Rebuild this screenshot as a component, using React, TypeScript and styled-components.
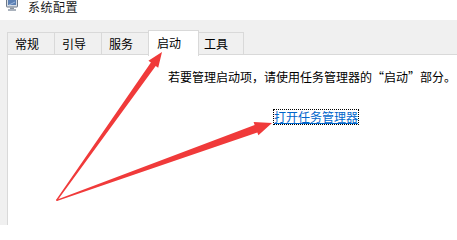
import React from 'react';
import styled, { createGlobalStyle } from 'styled-components';

const GlobalStyle = createGlobalStyle`
  html, body {
    margin: 0;
    padding: 0;
    background: #ffffff;
  }
  body {
    font-family: "Noto Sans CJK SC", "Microsoft YaHei", sans-serif;
    font-size: 12px;
    color: #000000;
  }
`;

const Window = styled.div`
  position: relative;
  width: 457px;
  height: 225px;
  overflow: hidden;
  display: flex;
  flex-direction: column;
  background: #f0f0f0;
`;

const TitleBar = styled.div`
  height: 20px;
  flex: none;
  background: #ffffff;
  display: flex;
  align-items: flex-start;
  gap: 10px;
  padding-left: 6px;
`;

const TitleText = styled.span`
  margin-top: 1px;
  font-size: 12px;
  line-height: 12px;
  color: #1a1a1a;
  letter-spacing: 0.5px;
`;

const Body = styled.div`
  flex: 1;
  display: flex;
  flex-direction: column;
  padding-top: 10px;
  min-height: 0;
`;

const TabStrip = styled.div`
  display: flex;
  align-items: flex-end;
  height: 25px;
  padding-left: 7px;
  position: relative;
  z-index: 1;
`;

const Tab = styled.div<{ $active?: boolean; $width: number }>`
  box-sizing: border-box;
  width: ${(p) => p.$width}px;
  height: ${(p) => (p.$active ? 26 : 23)}px;
  margin: ${(p) => (p.$active ? '0 -2px -1px -2px' : '0')};
  padding-left: ${(p) => (p.$active ? 8 : 7)}px;
  padding-top: ${(p) => (p.$active ? 5 : 4)}px;
  background: ${(p) => (p.$active ? '#ffffff' : '#f0f0f0')};
  border: 1px solid #d9d9d9;
  border-bottom: ${(p) => (p.$active ? 'none' : '1px solid #d9d9d9')};
  border-left-width: ${(p) => (p.$active ? 1 : 0)}px;
  font-size: 12px;
  line-height: 13px;
  color: #000000;
  position: relative;
  z-index: ${(p) => (p.$active ? 2 : 1)};

  &:first-child {
    border-left-width: 1px;
  }
`;

const Panel = styled.div`
  flex: 1;
  margin-left: 7px;
  margin-top: -1px;
  background: #ffffff;
  border: 1px solid #d9d9d9;
  border-right: none;
  border-bottom: none;
  display: flex;
  flex-direction: column;
  align-items: flex-start;
  padding: 15px 0 0 160px;
`;

const Notice = styled.p`
  margin: 0;
  font-size: 12px;
  line-height: 13px;
  white-space: nowrap;
  color: #000000;
`;

const ManagerLink = styled.a`
  margin: 27px 0 0 106px;
  padding: 0 0 1px 0;
  font-size: 12px;
  line-height: 13px;
  color: #0066cc;
  text-decoration: underline;
  outline: 1px dotted #000000;
  outline-offset: 0;
  white-space: nowrap;
  cursor: pointer;
`;

const Arrows = styled.svg`
  position: absolute;
  left: 0;
  top: 0;
  pointer-events: none;
  z-index: 5;
`;

const ComputerIcon = () => (
  <svg width="12" height="12" viewBox="0 0 12 12">
    <rect x="0.5" y="-3" width="11" height="10" rx="0.5" fill="#d6dde6" stroke="#6c7787" />
    <rect x="2" y="-2" width="8" height="7" fill="#5b7fb3" />
    <path d="M3 5 L9 2" stroke="#9fb9de" strokeWidth="1" />
    <rect x="4" y="7.5" width="4" height="1.5" fill="#8a939f" />
    <rect x="2" y="9" width="8" height="2" fill="#aab2bd" />
  </svg>
);

const tabs = [
  { label: '常规', width: 48 },
  { label: '引导', width: 47 },
  { label: '服务', width: 48 },
  { label: '启动', width: 51, active: true },
  { label: '工具', width: 47 },
];

export default function App() {
  return (
    <>
      <GlobalStyle />
      <Window>
        <TitleBar>
          <ComputerIcon />
          <TitleText>系统配置</TitleText>
        </TitleBar>
        <Body>
          <TabStrip>
            {tabs.map((t) => (
              <Tab key={t.label} $active={t.active} $width={t.width}>
                {t.label}
              </Tab>
            ))}
          </TabStrip>
          <Panel>
            <Notice>若要管理启动项，请使用任务管理器的“启动”部分。</Notice>
            <ManagerLink>打开任务管理器</ManagerLink>
          </Panel>
        </Body>
        <Arrows width="457" height="225" viewBox="0 0 457 225">
          <polygon
            points="56,200 150.9,62.5 148.4,60.7 162,52 158.2,67.7 155.7,66 57,201"
            fill="#f03a3a"
          />
          <polygon
            points="56,200 254.65,124.9 253.6,122.1 272,123 258.4,135.3 257.35,132.5 57,201"
            fill="#f03a3a"
          />
        </Arrows>
      </Window>
    </>
  );
}
